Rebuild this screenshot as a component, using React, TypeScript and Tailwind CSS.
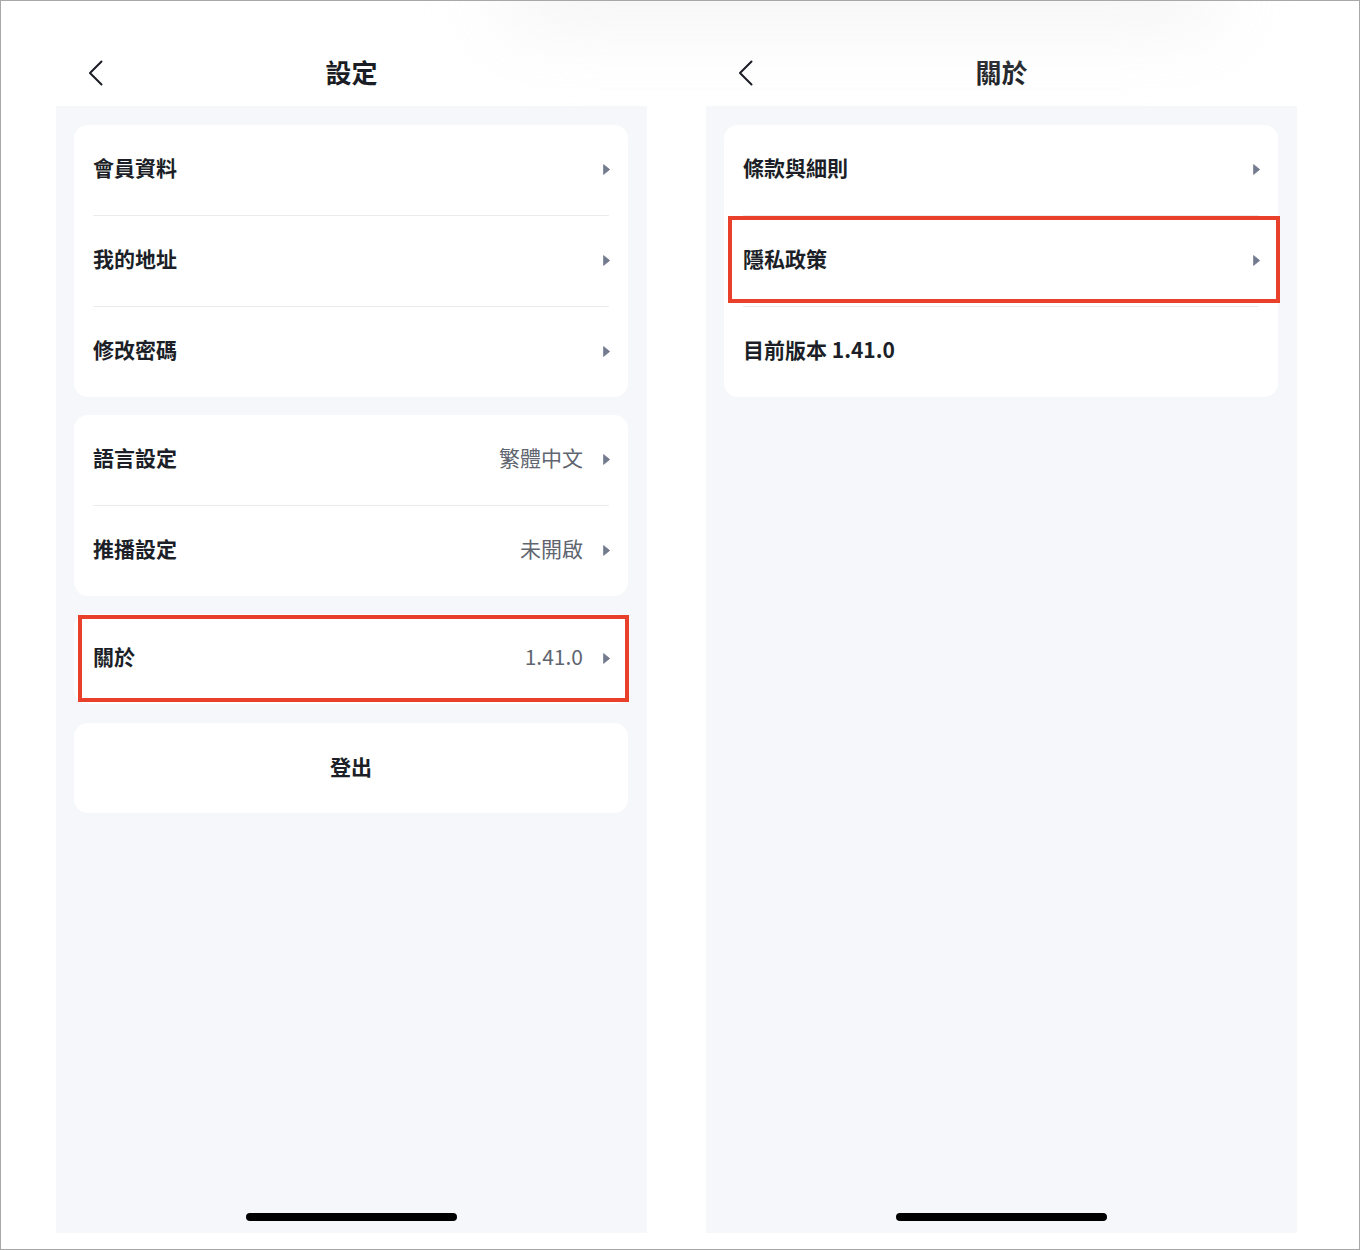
import React from 'react';

const font = { fontFamily: '"Noto Sans CJK TC", "Noto Sans", sans-serif' };

// small filled triangle used as the row arrow
const Arrow = () => (
  <svg width="7" height="11" viewBox="0 0 7 11" className="shrink-0 -translate-y-[1px]">
    <path d="M0.6 0.6 L6.6 5.5 L0.6 10.4 Z" fill="#737b8e" stroke="#737b8e" strokeWidth="0.8" strokeLinejoin="round" />
  </svg>
);

const Back = () => (
  <svg width="16" height="26" viewBox="0 0 16 26" fill="none">
    <path d="M13.5 1.5 L2 13 L13.5 24.5" stroke="#1a1d24" strokeWidth="2" strokeLinecap="round" strokeLinejoin="round" />
  </svg>
);

type Row = { label: string; value?: string; arrow?: boolean; marked?: boolean };

const Card = ({ rows }: { rows: Row[] }) => (
  <div className="bg-white rounded-[14px] flex flex-col">
    {rows.map((r, i) => (
      <div key={r.label} className="relative">
        {i > 0 && <div className="mx-[19px] h-px bg-[#ececef]" />}
        <div className="h-[90px] flex items-center pl-[19px] pr-[18px]">
          <span className="text-[21px] leading-none font-bold text-[#1c1f27] -translate-y-[3px]">{r.label}</span>
          <div className="flex-1" />
          {r.value && (
            <span className="text-[21px] leading-none text-[#60656f] mr-[20px] -translate-y-[3px]">{r.value}</span>
          )}
          {r.arrow !== false && <Arrow />}
        </div>
        {r.marked && (
          <div className="absolute left-[4px] right-[-2px] top-[1px] bottom-[3px] border-[4px] border-[#e8402b]" />
        )}
      </div>
    ))}
  </div>
);

const Phone = ({ title, children }: { title: string; children: React.ReactNode }) => (
  <div className="w-[591px] flex flex-col">
    <div className="h-[105px] pt-[46px]">
      <div className="h-[50px] grid grid-cols-[1fr_auto_1fr] items-center">
        <div className="pl-[32px] translate-y-[1px]">
          <Back />
        </div>
        <div className="text-[26px] leading-none font-bold text-[#1a1d24]">{title}</div>
        <div />
      </div>
    </div>
    <div className="h-[1127px] bg-[#f6f7fb] flex flex-col pl-[18px] pr-[19px] pt-[19px]">
      {children}
      <div className="flex-1" />
      <div className="self-center w-[211px] h-[8px] rounded-full bg-black mb-[12px]" />
    </div>
  </div>
);

export default function App() {
  return (
    <div
      className="relative w-[1360px] h-[1250px] bg-white border border-[#a8a8a8] overflow-hidden flex gap-[59px] pl-[55px]"
      style={font}
    >
      <div className="absolute left-[500px] top-[-40px] w-[720px] h-[60px] rounded-full bg-[#ececee] blur-2xl opacity-70" />

      <Phone title="設定">
        <div className="flex flex-col gap-[18px]">
          <Card rows={[{ label: '會員資料' }, { label: '我的地址' }, { label: '修改密碼' }]} />
          <Card rows={[{ label: '語言設定', value: '繁體中文' }, { label: '推播設定', value: '未開啟' }]} />
          <div className="relative bg-white rounded-[14px] h-[90px] flex items-center pl-[19px] pr-[18px]">
            <span className="text-[21px] leading-none font-bold text-[#1c1f27] -translate-y-[3px]">關於</span>
            <div className="flex-1" />
            <span className="text-[21px] leading-none text-[#60656f] mr-[20px] -translate-y-[3px]">1.41.0</span>
            <Arrow />
            <div className="absolute left-[4px] right-[-1px] top-[1px] bottom-[2px] border-[4px] border-[#e8402b]" />
          </div>
          <div className="bg-white rounded-[14px] h-[90px] flex items-center justify-center mt-[1px]">
            <span className="text-[21px] leading-none font-bold text-[#1c1f27] -translate-y-[2px]">登出</span>
          </div>
        </div>
      </Phone>

      <Phone title="關於">
        <Card
          rows={[
            { label: '條款與細則' },
            { label: '隱私政策', marked: true },
            { label: '目前版本 1.41.0', arrow: false },
          ]}
        />
      </Phone>
    </div>
  );
}
